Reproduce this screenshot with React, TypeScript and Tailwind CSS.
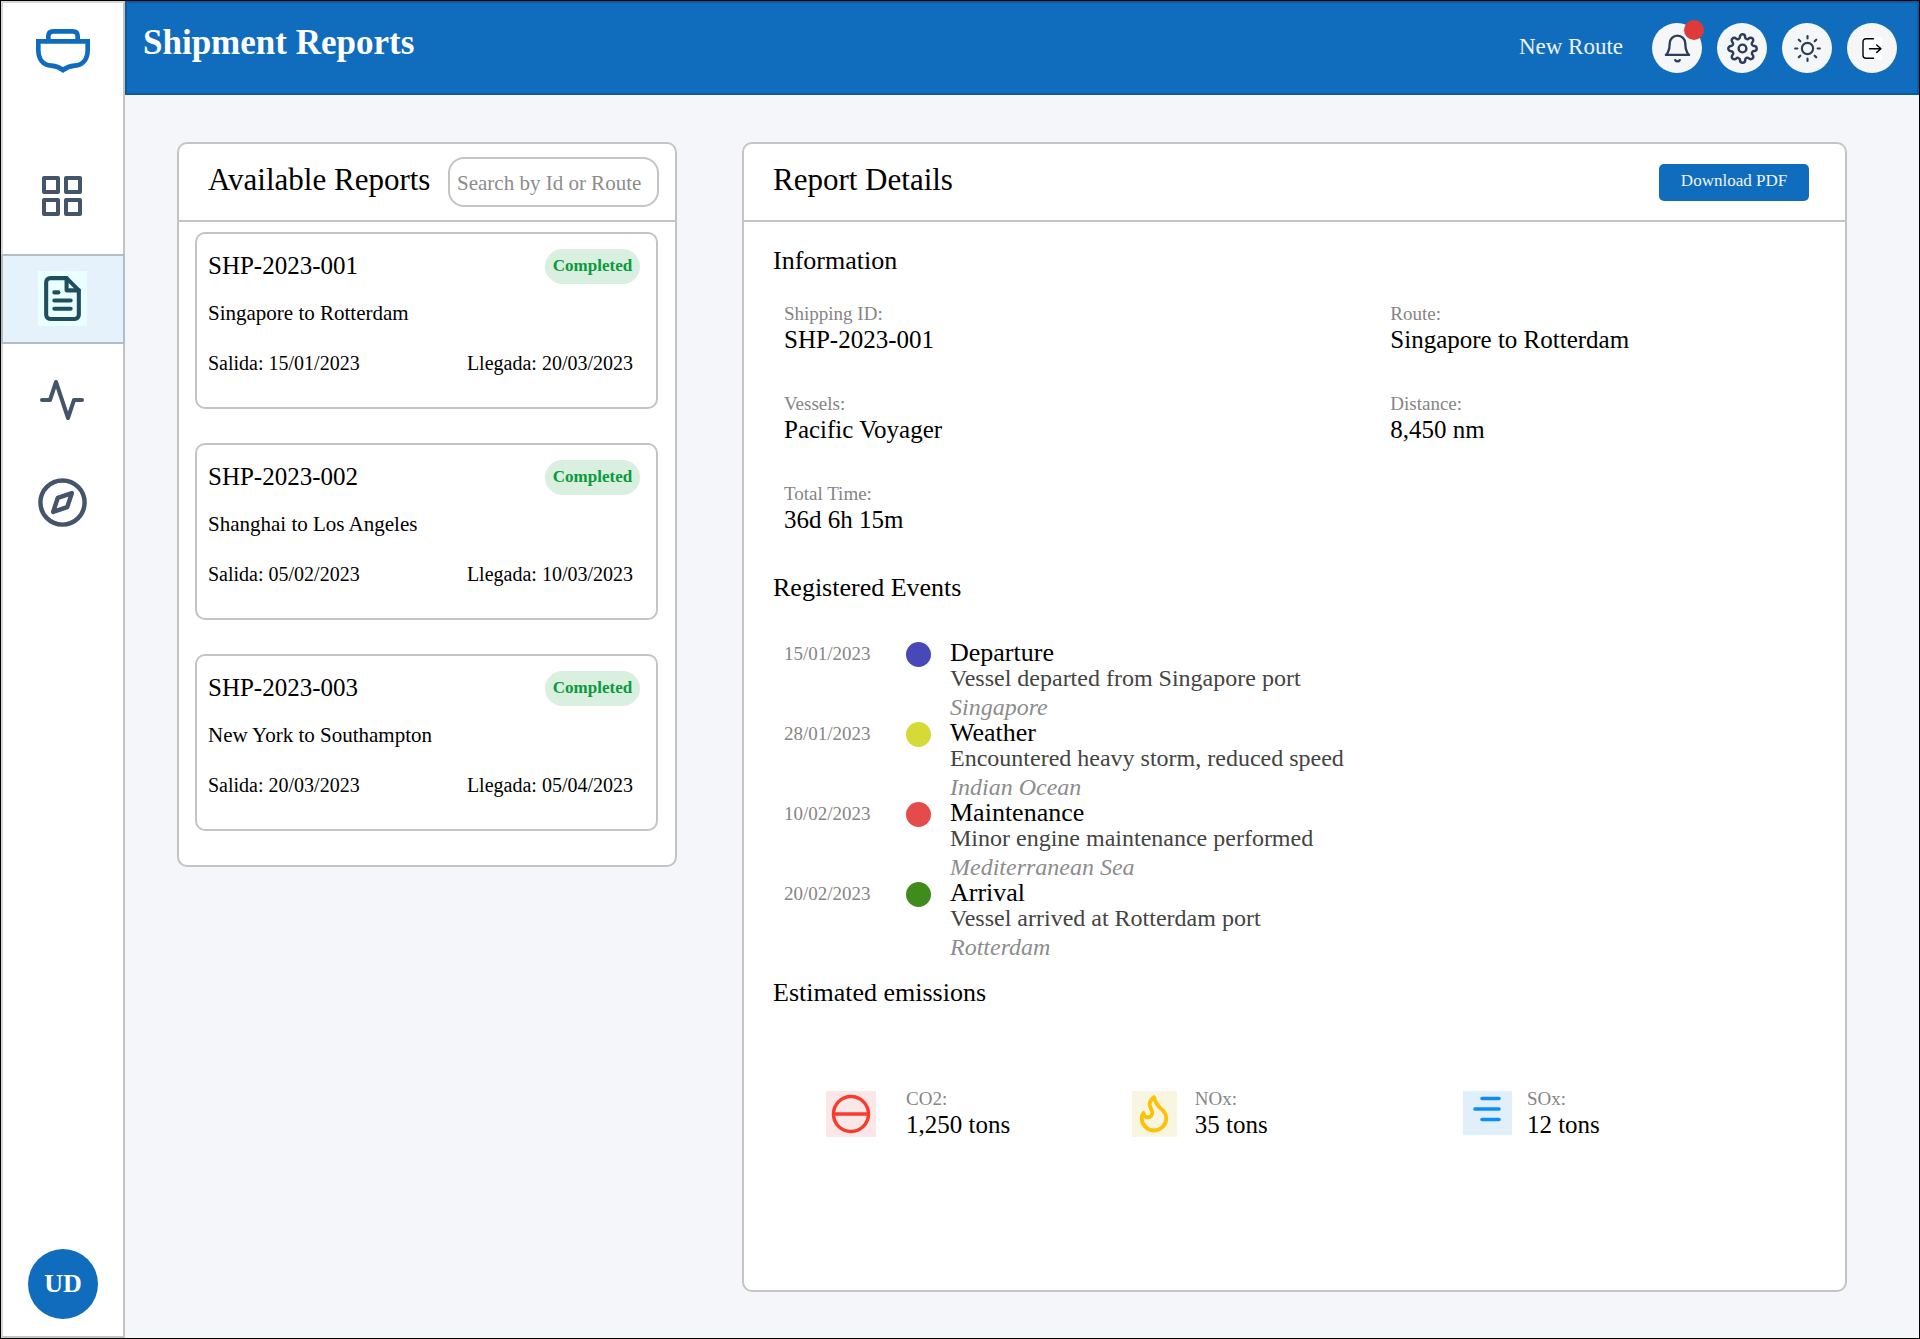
import { FiActivity, FiBell, FiCompass, FiGrid, FiSettings, FiSun } from "react-icons/fi";
import { Flame } from "lucide-react";
import type { ReactNode } from "react";

type Report = { id: string; route: string; departure: string; arrival: string };

const reports: Report[] = [
  { id: "SHP-2023-001", route: "Singapore to Rotterdam", departure: "15/01/2023", arrival: "20/03/2023" },
  { id: "SHP-2023-002", route: "Shanghai to Los Angeles", departure: "05/02/2023", arrival: "10/03/2023" },
  { id: "SHP-2023-003", route: "New York to Southampton", departure: "20/03/2023", arrival: "05/04/2023" },
];

const details = [
  { label: "Shipping ID:", value: "SHP-2023-001" },
  { label: "Route:", value: "Singapore to Rotterdam" },
  { label: "Vessels:", value: "Pacific Voyager" },
  { label: "Distance:", value: "8,450 nm" },
  { label: "Total Time:", value: "36d 6h 15m" },
];

const events = [
  { date: "15/01/2023", dot: "bg-[#4749b8]", title: "Departure", text: "Vessel departed from Singapore port", place: "Singapore" },
  { date: "28/01/2023", dot: "bg-[#d5da36]", title: "Weather", text: "Encountered heavy storm, reduced speed", place: "Indian Ocean" },
  { date: "10/02/2023", dot: "bg-[#e54b4b]", title: "Maintenance", text: "Minor engine maintenance performed", place: "Mediterranean Sea" },
  { date: "20/02/2023", dot: "bg-[#3f8c1c]", title: "Arrival", text: "Vessel arrived at Rotterdam port", place: "Rotterdam" },
];

function ShipLogo() {
  return (
    <svg viewBox="0 0 162 132" className="h-11 w-[54px]" fill="none" stroke="#0f6bbd" strokeWidth="14" aria-hidden="true">
      <path d="M37 37V22C37 12 42 7 52 7H110C120 7 125 12 125 22V37" />
      <path d="M7 37H155V62C155 92 140 108 116 110C98 112 92 115 81 123C70 115 64 112 46 110C22 108 7 92 7 62Z" />
    </svg>
  );
}

function DocumentIcon() {
  return (
    <svg viewBox="0 0 24 24" className="size-[49px]" fill="none" stroke="#1f4f5e" strokeWidth="2" strokeLinecap="round" strokeLinejoin="round" aria-hidden="true">
      <path d="M14 2H6a2 2 0 0 0-2 2v16a2 2 0 0 0 2 2h12a2 2 0 0 0 2-2V8z" />
      <path d="M14 2v6h6M8 9h2M8 13h8M8 17h8" />
    </svg>
  );
}

function LogoutIcon() {
  return (
    <svg viewBox="0 0 20 23" className="h-[23px] w-5 bg-white" fill="none" stroke="#000" strokeWidth="1.4" strokeLinecap="round" strokeLinejoin="round" aria-hidden="true">
      <path d="M11.5 1.7H4a3 3 0 0 0-3 3v13.6a3 3 0 0 0 3 3h7.5" />
      <path d="M7.5 11.7H19M14.7 8l4.3 3.7-4.3 3.7" />
    </svg>
  );
}

function NavItem({ label, active, children }: { label: string; active?: boolean; children: ReactNode }) {
  return (
    <li>
      <a
        href="#"
        aria-label={label}
        aria-current={active ? "page" : undefined}
        className={
          active
            ? "-mx-0.5 flex h-[90px] items-center justify-center border-2 border-[#b1bdc7] bg-[#e6f2fb] pr-0.5 pb-0.5"
            : "flex h-[90px] items-center justify-center pr-0.5 pb-0.5 text-[#44546a]"
        }
      >
        {children}
      </a>
    </li>
  );
}

function RoundButton({ label, children }: { label: string; children: ReactNode }) {
  return (
    <button type="button" aria-label={label} className="relative flex size-[50px] items-center justify-center rounded-full bg-[#f5f6f8] text-[#2b3d57]">
      {children}
    </button>
  );
}

function ReportCard({ report }: { report: Report }) {
  return (
    <li>
      <button type="button" className="block w-full rounded-[10px] border-2 border-[#c4c4c4] bg-white pt-[15px] pr-4 pb-[30px] pl-[11px] text-left">
        <span className="flex items-center justify-between">
          <span className="pb-0.5 text-[25px] leading-8">{report.id}</span>
          <span className="flex h-[35px] w-[95px] items-center justify-center rounded-full bg-[#d9efe0] pb-0.5 text-[17px] font-bold text-[#0b9a3c]">
            Completed
          </span>
        </span>
        <span className="mt-[15px] block text-[21px] leading-7">{report.route}</span>
        <span className="mt-[22px] flex justify-between pr-[7px] text-[20px] leading-7">
          <span>Salida: {report.departure}</span>
          <span>Llegada: {report.arrival}</span>
        </span>
      </button>
    </li>
  );
}

function Emission({ label, value, gap, icon }: { label: string; value: string; gap: string; icon: ReactNode }) {
  return (
    <div className={`flex items-start ${gap}`}>
      <div className="mt-1 shrink-0">{icon}</div>
      <dl>
        <dt className="text-[19px] leading-6 text-[#858585]">{label}</dt>
        <dd className="text-[25px] leading-7">{value}</dd>
      </dl>
    </div>
  );
}

export default function App() {
  return (
    <div className="flex min-h-screen border border-black bg-[#f5f6f9] font-['Liberation_Serif',serif] text-black">
      <aside className="flex w-[124px] shrink-0 flex-col border-2 border-[#c4c4c4] border-t-[#d6d6d6] border-l-[#d6d6d6] bg-white pt-[26px] pb-[17px]">
        <div className="flex justify-center">
          <ShipLogo />
        </div>
        <nav aria-label="Main" className="mt-[79px]">
          <ul className="flex flex-col gap-3">
            <NavItem label="Dashboard">
              <FiGrid className="size-12" />
            </NavItem>
            <NavItem label="Reports" active>
              <span className="flex h-[55px] w-[49px] items-center bg-[#eaffff]">
                <DocumentIcon />
              </span>
            </NavItem>
            <NavItem label="Activity">
              <FiActivity className="size-12" />
            </NavItem>
            <NavItem label="Explore">
              <FiCompass className="size-[53px]" />
            </NavItem>
          </ul>
        </nav>
        <button type="button" className="mx-auto mt-auto flex size-[70px] items-center justify-center rounded-full bg-[#106dbd] pb-0.5 text-[26px] font-bold text-white">
          UD
        </button>
      </aside>

      <div className="flex min-w-0 flex-1 flex-col">
        <header className="flex h-[94px] shrink-0 items-center justify-between border-2 border-[#0f5a9c] bg-[#106dbd] pr-5 pl-4">
          <h1 className="pb-2.5 text-[35px] leading-10 font-bold text-white">Shipment Reports</h1>
          <div className="flex items-center gap-[15px]">
            <a href="#" className="mr-3.5 pb-0.5 text-[23px] leading-7 text-[#eef4fb]">
              New Route
            </a>
            <RoundButton label="Notifications">
              <FiBell className="size-[31px]" strokeWidth={1.8} />
              <span className="absolute -top-[3px] -right-0.5 size-5 rounded-full bg-[#de3a3a]" />
            </RoundButton>
            <RoundButton label="Settings">
              <FiSettings className="size-[31px]" strokeWidth={1.9} />
            </RoundButton>
            <RoundButton label="Light mode">
              <FiSun className="size-[27px]" strokeWidth={1.9} />
            </RoundButton>
            <RoundButton label="Log out">
              <LogoutIcon />
            </RoundButton>
          </div>
        </header>

        <main className="flex flex-1 items-stretch gap-[65px] pt-[47px] pr-[72px] pb-[46px] pl-[52px]">
          <section className="w-[500px] shrink-0 self-start rounded-[10px] border-2 border-[#c4c4c4] bg-white">
            <div className="flex h-[78px] items-center justify-between border-b-2 border-[#c4c4c4] pr-4 pl-[29px]">
              <h2 className="pb-1 text-[31px] leading-10">Available Reports</h2>
              <input
                type="text"
                aria-label="Search by Id or Route"
                placeholder="Search by Id or Route"
                className="h-[50px] w-[211px] rounded-2xl border-2 border-[#c4c4c4] px-[7px] pt-[3px] text-[21px] placeholder:text-[#8c8c8c]"
              />
            </div>
            <ul className="flex flex-col gap-[34px] pt-2.5 pr-[17px] pb-[34px] pl-4">
              {reports.map((report) => (
                <ReportCard key={report.id} report={report} />
              ))}
            </ul>
          </section>

          <section className="min-w-0 flex-1 rounded-[10px] border-2 border-[#c4c4c4] bg-white">
            <div className="flex h-[78px] items-center justify-between border-b-2 border-[#c4c4c4] pr-9 pl-[29px]">
              <h2 className="pb-1 text-[31px] leading-10">Report Details</h2>
              <button type="button" className="h-[37px] w-[150px] rounded-[5px] bg-[#106dbd] pb-0.5 text-[17px] text-[#eef4fb]">
                Download PDF
              </button>
            </div>

            <div className="pt-[23px] pl-[29px]">
              <h3 className="text-[26px] leading-8">Information</h3>
              <dl className="mt-[25px] grid grid-cols-[4fr_3fr] gap-y-[38px] pl-[11px]">
                {details.map((item) => (
                  <div key={item.label}>
                    <dt className="text-[19px] leading-6 text-[#858585]">{item.label}</dt>
                    <dd className="text-[25px] leading-7">{item.value}</dd>
                  </div>
                ))}
              </dl>

              <h3 className="mt-[38px] text-[26px] leading-8">Registered Events</h3>
              <ol className="mt-9 pl-[11px]">
                {events.map((event) => (
                  <li key={event.title} className="flex items-start">
                    <time className="w-[122px] shrink-0 text-[19px] leading-7 text-[#858585]">{event.date}</time>
                    <span className={`mt-0.5 mr-[19px] size-[25px] shrink-0 rounded-full ${event.dot}`} />
                    <div className="text-[24px]">
                      <h4 className="text-[26px] leading-[26px]">{event.title}</h4>
                      <p className="leading-6 text-[#444444]">{event.text}</p>
                      <p className="mt-1 leading-[26px] text-[#8c8c8c] italic">{event.place}</p>
                    </div>
                  </li>
                ))}
              </ol>

              <h3 className="mt-[17px] text-[26px] leading-8">Estimated emissions</h3>
              <div className="mt-[78px] grid grid-cols-[12fr_13fr_15fr] pl-[53px]">
                <Emission
                  label="CO2:"
                  value="1,250 tons"
                  gap="gap-[30px]"
                  icon={
                    <svg viewBox="0 0 50 46" className="h-[46px] w-[50px] bg-[#fae8e8]" fill="none" stroke="#fb3a2c" strokeWidth="3.5" aria-hidden="true">
                      <circle cx="25" cy="23" r="17.5" />
                      <path d="M7.5 23h35" />
                    </svg>
                  }
                />
                <Emission
                  label="NOx:"
                  value="35 tons"
                  gap="gap-[18px]"
                  icon={
                    <span className="flex h-[46px] w-[45px] items-center justify-center bg-[#f8f5e1] pb-0.5 text-[#ffc107]">
                      <Flame className="size-[42px]" strokeWidth={2.2} />
                    </span>
                  }
                />
                <Emission
                  label="SOx:"
                  value="12 tons"
                  gap="gap-[15px]"
                  icon={
                    <svg viewBox="0 0 49 44" className="h-11 w-[49px] bg-[#e1effb]" fill="none" stroke="#0a8cfa" strokeWidth="3.6" strokeLinecap="round" aria-hidden="true">
                      <path d="M19 7.5h17M12 18h24M19 28.5h17" />
                    </svg>
                  }
                />
              </div>
            </div>
          </section>
        </main>
      </div>
    </div>
  );
}
